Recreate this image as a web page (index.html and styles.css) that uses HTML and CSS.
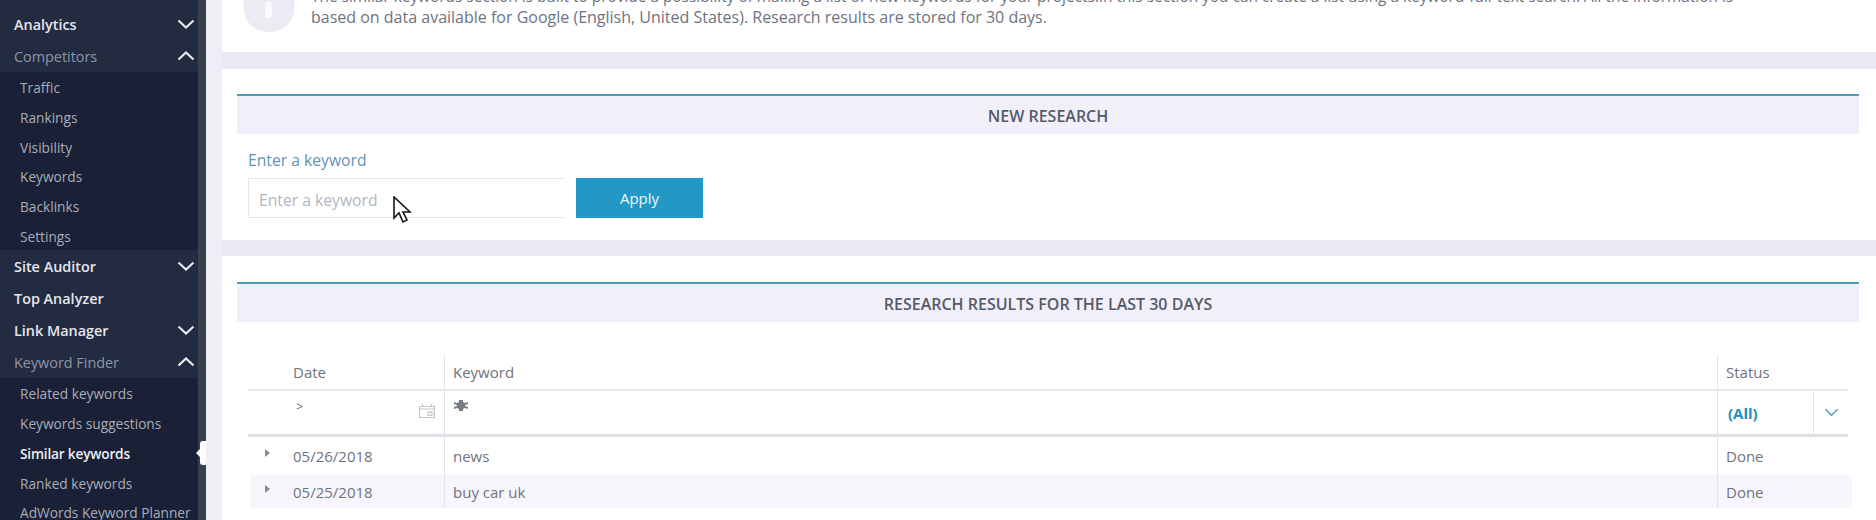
FILE: index.html
```html
<!DOCTYPE html>
<html lang="en">
<head>
<meta charset="utf-8">
<title>Similar keywords</title>
<link rel="stylesheet" href="styles.css">
</head>
<body>
<div class="page">
  <aside class="sidebar">
    <nav class="nav">
      <div class="item"><span>Analytics</span><svg class="chev" viewBox="0 0 18 10"><path d="M1.5 1.5 9 8.5l7.5-7"/></svg></div>
      <div class="item open"><span>Competitors</span><svg class="chev" viewBox="0 0 18 10"><path d="M1.5 8.5 9 1.5l7.5 7"/></svg></div>
      <div class="subs">
        <div class="sub">Traffic</div>
        <div class="sub">Rankings</div>
        <div class="sub">Visibility</div>
        <div class="sub">Keywords</div>
        <div class="sub">Backlinks</div>
        <div class="sub">Settings</div>
      </div>
      <div class="item"><span>Site Auditor</span><svg class="chev" viewBox="0 0 18 10"><path d="M1.5 1.5 9 8.5l7.5-7"/></svg></div>
      <div class="item"><span>Top Analyzer</span></div>
      <div class="item"><span>Link Manager</span><svg class="chev" viewBox="0 0 18 10"><path d="M1.5 1.5 9 8.5l7.5-7"/></svg></div>
      <div class="item open"><span>Keyword Finder</span><svg class="chev" viewBox="0 0 18 10"><path d="M1.5 8.5 9 1.5l7.5 7"/></svg></div>
      <div class="subs">
        <div class="sub">Related keywords</div>
        <div class="sub">Keywords suggestions</div>
        <div class="sub active">Similar keywords<i class="notch"></i></div>
        <div class="sub">Ranked keywords</div>
        <div class="sub">AdWords Keyword Planner</div>
      </div>
    </nav>
  </aside>
  <main class="main">
    <section class="card intro">
      <svg class="info" viewBox="0 0 54 64"><path class="info-bg" d="M27 0c15 0 27 10 27 27v10c0 17-12 27-27 27S0 54 0 37V27C0 10 12 0 27 0z"/><rect class="info-i" x="23" y="32" width="7" height="17" rx="1"/></svg>
      <p class="intro-text"><span class="line-a">The similar keywords section is built to provide a possibility of making a list of new keywords for your projects.In this section you can create a list using a keyword-full-text search. All the information is</span> <span class="line-b">based on data available for Google (English, United States). Research results are stored for 30 days.</span></p>
    </section>
    <section class="card research">
      <h2 class="head">NEW RESEARCH</h2>
      <label class="label" for="kw">Enter a keyword</label>
      <div class="form">
        <input class="input" id="kw" placeholder="Enter a keyword">
        <button class="apply" type="button">Apply</button>
        <svg class="cursor" viewBox="0 0 19 28"><path d="M1 1v21l5-5 4 9 4-2-4-8h7z"/></svg>
      </div>
    </section>
    <section class="card results">
      <h2 class="head">RESEARCH RESULTS FOR THE LAST 30 DAYS</h2>
      <div class="table">
        <div class="row hdr">
          <div class="cell arrow-cell"></div>
          <div class="cell">Date</div>
          <div class="cell kw">Keyword</div>
          <div class="cell st">Status</div>
        </div>
        <div class="row filter">
          <div class="cell arrow-cell"></div>
          <div class="cell date-filter"><span class="gt">&gt;</span>
            <svg class="cal" viewBox="0 0 16 14"><path d="M.5 2.5h15v11H.5zM3.5 0v3M12.5 0v3M.5 5h15"/><rect x="9" y="8" width="4" height="3.5"/></svg>
          </div>
          <div class="cell kw"><svg class="bug" viewBox="0 0 16 11"><path d="M6 0h4v2l2 1 3-1v2l-3 1v1l3 1v2l-3-1-2 1v2H6V9L4 8 1 9V7l3-1V5L1 4V2l3 1 2-1z"/></svg></div>
          <div class="cell st status-filter"><b class="all">(All)</b><span class="drop"><svg class="chev-s" viewBox="0 0 16 9"><path d="M1.5 1 8 7.5 14.5 1"/></svg></span></div>
        </div>
        <div class="row data">
          <div class="cell arrow-cell"><i class="tri"></i></div>
          <div class="cell">05/26/2018</div>
          <div class="cell kw">news</div>
          <div class="cell st">Done</div>
        </div>
        <div class="row data alt">
          <div class="cell arrow-cell"><i class="tri"></i></div>
          <div class="cell">05/25/2018</div>
          <div class="cell kw">buy car uk</div>
          <div class="cell st">Done</div>
        </div>
      </div>
    </section>
  </main>
</div>
</body>
</html>
```
FILE: styles.css
```css
* { box-sizing: border-box; }
html, body { margin: 0; height: 520px; overflow: hidden; }
body { font-family: "Open Sans", "Liberation Sans", sans-serif; background: #eeeef6; color: #6f7380; }
.page { display: flex; height: 520px; overflow: hidden; }

.sidebar { width: 206px; flex: none; background: linear-gradient(to right, #232b40 198px, #3b404f 198px); padding-top: 8px; overflow: hidden; }
.nav { display: flex; flex-direction: column; width: 198px; }
.item { height: 32px; flex: none; display: flex; align-items: center; justify-content: space-between; padding: 0 3px 0 14px; font-size: 14.4px; font-weight: 600; color: #e4e6ec; }
.item.open { color: #8f95a5; font-weight: 400; }
.chev { width: 18px; height: 10px; fill: none; stroke: #e8eaf0; stroke-width: 2.2; }
.subs { background: #1a2035; flex: none; }
.sub { height: 29.7px; display: flex; align-items: center; position: relative; padding: 2px 0 0 20px; font-size: 13.7px; color: #a9adb8; }
.sub.active { color: #eceef3; font-weight: 600; letter-spacing: -0.2px; }
.notch { position: absolute; right: -8px; top: 3px; width: 6px; height: 24px; background: #fdfdff; border-radius: 3px 0 0 3px; }
.notch::before { content: ""; position: absolute; left: -4px; top: 7px; border: 5px solid transparent; border-right-color: #fdfdff; border-left: 0; }

.main { flex: 1; min-width: 0; padding-left: 16px; display: flex; flex-direction: column; }
.card { background: #fff; flex: none; }
.intro { height: 52px; display: flex; position: relative; padding-left: 89px; padding-right: 40px; }
.info { position: absolute; left: 20px; top: -28px; width: 54px; height: 60px; }
.info-bg { fill: #ecebf3; }
.info-i { fill: #fbfbfd; }
.intro-text { margin: -13px 0 0; line-height: 20px; height: 40px; }
.line-a { display: block; font-size: 15.4px; white-space: nowrap; }
.line-b { display: block; font-size: 16px; white-space: nowrap; }

.research { height: 171px; margin-top: 17px; padding: 25px 17px 0 15px; box-shadow: 0 -17px 0 #ebeaf3; }
.results { flex: 1; margin-top: 16px; padding: 26px 17px 0 15px; box-shadow: 0 -16px 0 #ebeaf3; }
.head { margin: 0; height: 40px; border-top: 2px solid #4d9db3; padding-top: 2px; background: #f1f0fa; display: flex; align-items: center; justify-content: center; font-size: 16px; font-weight: 600; color: #555a68; }
.label { display: block; margin: 15px 0 0 11px; font-size: 15.7px; line-height: 22px; color: #5f93b3; }
.form { display: flex; gap: 11px; margin: 7px 0 0 11px; position: relative; }
.input { width: 317px; height: 40px; border: 1px solid #e8e5ec; border-right: 0; padding: 4px 10px 0; font: 15.7px "Open Sans", sans-serif; color: #6f7380; outline: 0; background: #fff; }
.input::placeholder { color: #b4b5c1; opacity: 1; }
.apply { width: 127px; height: 40px; border: 0; background: #2199c4; color: #eef7fb; font: 15px "Open Sans", sans-serif; padding: 0; }
.cursor { position: absolute; left: 145px; top: 18px; width: 19px; height: 28px; fill: #fff; stroke: #14161c; stroke-width: 1.6; }

.table { margin: 33px 11px 0; position: relative; }
.row { display: grid; grid-template-columns: 45px 151px 1fr 131px; }
.cell { display: flex; align-items: center; font-size: 15px; }
.kw, .st { border-left: 1px solid #e4e4ea; padding-left: 8px; }
.st { padding-left: 8px; }
.hdr { height: 36px; border-bottom: 2px solid #e8e8ee; }
.filter { height: 46px; border-bottom: 3px solid #dfdfe5; }
.data { height: 38px; }
.alt { height: 33px; background: #f6f6fc; margin-right: -4px; margin-left: 2px; grid-template-columns: 43px 151px 1fr 135px; }
.alt .cell { padding-top: 1px; }
.date-filter { position: relative; align-items: flex-start; padding-top: 7px; }
.gt { font-size: 13px; line-height: 16px; padding-left: 3px; }
.cal { position: absolute; right: 9px; top: 13px; width: 16px; height: 14px; fill: none; stroke: #c4c5cc; stroke-width: 1.2; }
.bug { width: 16px; height: 11px; fill: #777b88; margin-bottom: 14px; }
.status-filter { padding-left: 0; display: grid; grid-template-columns: 95px 1fr; align-items: stretch; }
.all { color: #1f8fb8; font-weight: 700; padding-left: 10px; display: flex; align-items: center; font-size: 15px; }
.drop { border-left: 1px solid #e4e4ea; display: flex; align-items: center; justify-content: center; }
.chev-s { width: 15px; height: 9px; fill: none; stroke: #5a9bbb; stroke-width: 1.6; }
.arrow-cell { padding-left: 17px; }
.alt .arrow-cell { padding-left: 15px; }
.tri { display: block; border: 4px solid transparent; border-left: 5px solid #85899a; border-right: 0; margin-bottom: 6px; }
```
